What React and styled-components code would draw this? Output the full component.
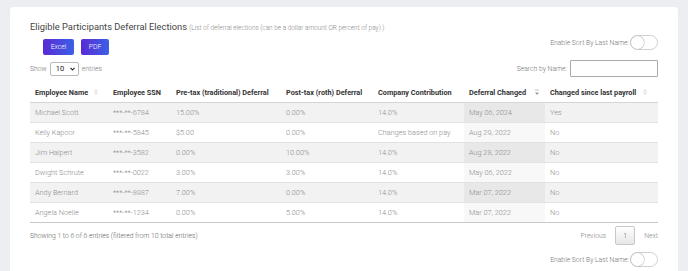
import React from "react";
import styled, { createGlobalStyle } from "styled-components";

const GlobalStyle = createGlobalStyle`
  body {
    margin: 0;
    background: #eceef1;
    font-family: Roboto, "Liberation Sans", sans-serif;
  }
`;

const Card = styled.div`
  margin: 7px 10px 0 10px;
  padding: 13px 20px 6px 20px;
  background: #fff;
  border-radius: 4px 4px 0 0;
  box-sizing: border-box;
`;

const Title = styled.h2`
  margin: 0;
  font-size: 9.3px;
  font-weight: 400;
  color: #454545;
  line-height: 14px;
`;

const Sub = styled.small`
  font-size: 6.45px;
  color: #8a8a8a;
  font-weight: 300;
`;

const TopRow = styled.div`
  display: flex;
  justify-content: space-between;
  align-items: flex-start;
`;

const Buttons = styled.div`
  display: flex;
  gap: 7px;
  margin: 4px 0 0 13px;
`;

const Button = styled.button`
  height: 16px;
  padding: 0;
  border: none;
  border-radius: 2px;
  background: linear-gradient(to right, #5a2ad4, #3b60e6);
  color: #fff;
  font-family: inherit;
  font-size: 6.8px;
  font-weight: 300;
  width: ${(p) => p.w}px;
`;

const SortToggle = styled.div`
  display: flex;
  align-items: center;
  gap: 1px;
  font-size: 6.8px;
  font-weight: 300;
  color: #777;
`;

const Switch = styled.span`
  display: inline-block;
  width: 26px;
  height: 13px;
  border: 1px solid #d0d0d0;
  border-radius: 8px;
  position: relative;
  background: #fff;

  &::before {
    content: "";
    position: absolute;
    left: 0;
    top: 0;
    width: 13px;
    height: 13px;
    border-radius: 50%;
    background: #fff;
    box-shadow: 0 0 1px 0.5px #bbb;
  }
`;

const Toolbar = styled.div`
  display: flex;
  justify-content: space-between;
  align-items: center;
  margin-top: 5px;
  font-size: 6.8px;
  font-weight: 300;
  color: #777;
`;

const Label = styled.label`
  display: flex;
  align-items: center;
  gap: 3px;
`;

const Select = styled.div`
  width: 29px;
  height: 14px;
  box-sizing: border-box;
  border: 1px solid #bbb;
  border-radius: 2px;
  display: flex;
  align-items: center;
  justify-content: space-between;
  padding: 0 3px 0 5px;
  color: #222;
  font-size: 7.5px;
  font-weight: 400;
`;

const SearchInput = styled.div`
  width: 88px;
  height: 17px;
  box-sizing: border-box;
  border: 1px solid #aaa;
  border-radius: 1px;
`;

const Table = styled.table`
  width: 100%;
  margin-top: 5px;
  border-collapse: collapse;
  table-layout: fixed;
  font-size: 7.3px;
`;

const Th = styled.th`
  height: 20px;
  padding: 0 5px;
  text-align: left;
  font-weight: 700;
  color: #333;
  border-bottom: 1px solid #d6d6d6;
  white-space: nowrap;
`;

const HeadInner = styled.span`
  display: flex;
  align-items: center;
  justify-content: space-between;
  padding-right: ${(p) => p.pr || 0}px;
`;

const Tr = styled.tr`
  background: ${(p) => (p.odd ? "#f2f2f2" : "#fff")};
  &:last-child td {
    border-bottom: 1px solid #c8c8c8;
  }
`;

const Td = styled.td`
  height: 19px;
  padding: 0 5px;
  color: #8a8a8a;
  font-weight: 300;
  border-top: 1px solid #e2e2e2;
  white-space: nowrap;
  background: ${(p) => (p.sorted ? (p.odd ? "#e8e8e8" : "#f8f8f8") : "transparent")};
`;

const Footer = styled.div`
  display: flex;
  justify-content: space-between;
  align-items: center;
  margin-top: 3px;
  font-size: 6.8px;
  font-weight: 300;
  color: #666;
`;

const Pager = styled.div`
  display: flex;
  align-items: center;
  gap: 9px;
  color: #888;
`;

const PageBox = styled.span`
  width: 20px;
  height: 19px;
  box-sizing: border-box;
  border: 1px solid #c8c8c8;
  border-radius: 2px;
  background: linear-gradient(#fff, #e6e6e6);
  display: flex;
  align-items: center;
  justify-content: center;
  color: #555;
`;

const Bottom = styled.div`
  display: flex;
  justify-content: flex-end;
  margin-top: 7px;
`;

const SortIcon = ({ active }) => (
  <svg width="6" height="8" viewBox="0 0 6 8">
    {active ? (
      <>
        <path d="M1 4.5h4L3 7z" fill="#9a9a9a" />
        <rect x="1" y="1.5" width="4" height="1" fill="#c8c8c8" />
      </>
    ) : (
      <>
        <path d="M1 3.5h4L3 1z" fill="#e0e0e0" />
        <path d="M1 4.5h4L3 7z" fill="#e0e0e0" />
      </>
    )}
  </svg>
);

const cols = [78, 63, 110, 92, 91, 81, 113];

const rows = [
  ["Michael Scott", "***-**-6784", "15.00%", "0.00%", "14.0%", "May 06, 2024", "Yes"],
  ["Kelly Kapoor", "***-**-5845", "$5.00", "0.00%", "Changes based on pay", "Aug 29, 2022", "No"],
  ["Jim Halpert", "***-**-3582", "0.00%", "10.00%", "14.0%", "Aug 28, 2022", "No"],
  ["Dwight Schrute", "***-**-0022", "3.00%", "3.00%", "14.0%", "May 06, 2022", "No"],
  ["Andy Bernard", "***-**-8987", "7.00%", "0.00%", "14.0%", "Mar 07, 2022", "No"],
  ["Angela Noelle", "***-**-1234", "0.00%", "5.00%", "14.0%", "Mar 07, 2022", "No"],
];

export default function App() {
  return (
    <>
      <GlobalStyle />
      <Card>
        <Title>
          Eligible Participants Deferral Elections{" "}
          <Sub>(List of deferral elections (can be a dollar amount OR percent of pay).)</Sub>
        </Title>
        <TopRow>
          <Buttons>
            <Button w={31}>Excel</Button>
            <Button w={28}>PDF</Button>
          </Buttons>
          <SortToggle>
            Enable Sort By Last Name: <Switch />
          </SortToggle>
        </TopRow>
        <Toolbar>
          <Label>
            Show
            <Select>
              10
              <svg width="5" height="4" viewBox="0 0 5 4">
                <path d="M0.5 0.8L2.5 3l2-2.2" stroke="#222" strokeWidth="1.1" fill="none" />
              </svg>
            </Select>
            entries
          </Label>
          <Label>
            Search by Name:
            <SearchInput />
          </Label>
        </Toolbar>
        <Table>
          <colgroup>
            {cols.map((w, i) => (
              <col key={i} style={{ width: w }} />
            ))}
          </colgroup>
          <thead>
            <tr>
              <Th>
                <HeadInner pr={4}>
                  Employee Name <SortIcon />
                </HeadInner>
              </Th>
              <Th>Employee SSN</Th>
              <Th>Pre-tax (traditional) Deferral</Th>
              <Th>Post-tax (roth) Deferral</Th>
              <Th>Company Contribution</Th>
              <Th>
                <HeadInner>
                  Deferral Changed <SortIcon active />
                </HeadInner>
              </Th>
              <Th>
                <HeadInner pr={5}>
                  Changed since last payroll <SortIcon />
                </HeadInner>
              </Th>
            </tr>
          </thead>
          <tbody>
            {rows.map((r, i) => (
              <Tr key={i} odd={i % 2 === 0}>
                {r.map((c, j) => (
                  <Td key={j} sorted={j === 5} odd={i % 2 === 0}>
                    {c}
                  </Td>
                ))}
              </Tr>
            ))}
          </tbody>
        </Table>
        <Footer>
          <span>Showing 1 to 6 of 6 entries (filtered from 10 total entries)</span>
          <Pager>
            <span>Previous</span>
            <PageBox>1</PageBox>
            <span>Next</span>
          </Pager>
        </Footer>
        <Bottom>
          <SortToggle>
            Enable Sort By Last Name: <Switch />
          </SortToggle>
        </Bottom>
      </Card>
    </>
  );
}
